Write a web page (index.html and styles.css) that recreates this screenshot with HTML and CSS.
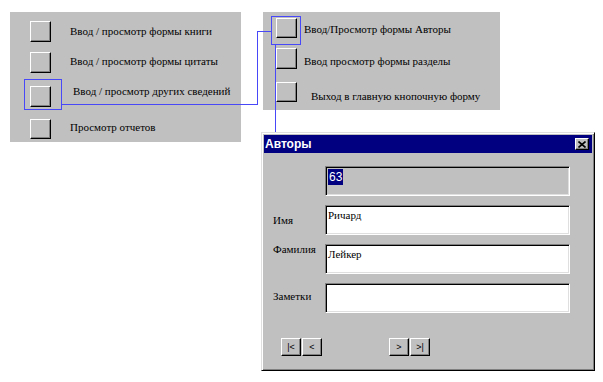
FILE: index.html
```html
<!DOCTYPE html>
<html>
<head>
  <meta charset="UTF-8">
  <title>Авторы - кнопочная форма</title>
  <link rel="stylesheet" href="styles.css">
</head>
<body>
  <div class="canvas">
    <!-- Main switchboard -->
    <div class="panel panel-main">
      <div class="row row-1"><span class="btn"></span><span class="caption">Ввод / просмотр формы книги</span></div>
      <div class="row row-2"><span class="btn"></span><span class="caption">Ввод / просмотр формы цитаты</span></div>
      <div class="row row-3"><span class="btn"></span><span class="caption wide">Ввод / просмотр других сведений</span></div>
      <div class="row row-4"><span class="btn"></span><span class="caption">Просмотр отчетов</span></div>
    </div>

    <!-- Sub switchboard -->
    <div class="panel panel-sub">
      <div class="row row-a"><span class="btn"></span><span class="caption near">Ввод/Просмотр формы Авторы</span></div>
      <div class="row row-b"><span class="btn"></span><span class="caption near">Ввод просмотр формы разделы</span></div>
      <div class="row row-c"><span class="btn"></span><span class="caption far">Выход в главную кнопочную форму</span></div>
    </div>

    <!-- Selection marks and connectors -->
    <div class="mark mark-left"></div>
    <div class="mark mark-right"></div>
    <div class="wire wire-h1"></div>
    <div class="wire wire-v1"></div>
    <div class="wire wire-h2"></div>
    <div class="wire wire-v2"></div>

    <!-- Authors form -->
    <div class="dialog">
      <div class="titlebar">
        <span class="title">Авторы</span>
        <span class="close">
          <svg width="8" height="7" viewBox="0 0 8 7"><path d="M0.5 0.5 L7.5 6.5 M7.5 0.5 L0.5 6.5" stroke="#000" stroke-width="1.6"/></svg>
        </span>
      </div>
      <div class="form">
        <div class="fields">
          <span class="label"></span>
          <div class="field field-id"><span class="selected">63</span></div>
          <span class="label">Имя</span>
          <div class="field">Ричард</div>
          <span class="label label-top">Фамилия</span>
          <div class="field">Лейкер</div>
          <span class="label">Заметки</span>
          <div class="field"></div>
        </div>
        <div class="nav">
          <div class="nav-group">
            <span class="nav-btn">|&lt;</span>
            <span class="nav-btn">&lt;</span>
          </div>
          <div class="nav-group">
            <span class="nav-btn">&gt;</span>
            <span class="nav-btn">&gt;|</span>
          </div>
        </div>
      </div>
    </div>
  </div>
</body>
</html>
```

FILE: styles.css
```css
body { margin: 0; background: #fff; font-family: "Liberation Serif", "Times New Roman", serif; font-size: 11px; color: #000; }
.canvas { position: relative; width: 603px; height: 382px; overflow: hidden; }

/* switchboard panels */
.panel { position: absolute; background: #c0c0c0; box-sizing: border-box; }
.panel-main { left: 10px; top: 12px; width: 231px; height: 130px; padding: 9px 0 0 20px; }
.panel-sub { left: 263px; top: 12px; width: 237px; height: 98px; padding: 6px 0 0 13px; }

.row { display: flex; align-items: center; }
.row-1 { height: 21px; margin-bottom: 10px; }
.row-2 { height: 21px; margin-bottom: 13px; }
.row-3 { height: 21px; margin-bottom: 12px; }
.row-4 { height: 20px; }
.row-a { height: 20px; margin-bottom: 10px; }
.row-b { height: 21px; margin-bottom: 13px; }
.row-c { height: 19px; }

.btn { width: 21px; height: 21px; flex: none; box-sizing: border-box; background: #c0c0c0;
  border-top: 1px solid #fff; border-left: 1px solid #fff; border-right: 1px solid #000; border-bottom: 1px solid #000;
  box-shadow: inset -1px -1px #808080; }
.row-4 .btn, .row-a .btn, .row-c .btn { height: 20px; }
.caption { margin-left: 19px; white-space: nowrap; }
.row-1 .caption { margin-top: -2px; }
.row-2 .caption { margin-top: -4px; }
.row-3 .caption { margin-top: -11px; }
.row-4 .caption { margin-top: -4px; }
.caption.wide { margin-left: 22px; }
.caption.near { margin-left: 7px; }
.caption.far { margin-left: 14px; }
.row-a .caption { margin-top: 2px; }
.row-b .caption { margin-top: 5px; }
.row-c .caption { margin-top: 8px; }

/* selection marks and connector wires */
.mark { position: absolute; border: 1px solid #4848f8; box-sizing: border-box; }
.mark-left { left: 24px; top: 79px; width: 38px; height: 31px; }
.mark-right { left: 271px; top: 16px; width: 30px; height: 29px; }
.wire { position: absolute; background: #4848f8; }
.wire-h1 { left: 62px; top: 104px; width: 196px; height: 1px; }
.wire-v1 { left: 257px; top: 31px; width: 1px; height: 74px; }
.wire-h2 { left: 257px; top: 31px; width: 14px; height: 1px; }
.wire-v2 { left: 275px; top: 45px; width: 1px; height: 88px; }

/* dialog window */
.dialog { position: absolute; left: 261px; top: 132px; width: 334px; height: 239px; box-sizing: border-box;
  background: #c0c0c0; border: 1px solid; border-color: #dfdfdf #000 #000 #dfdfdf;
  box-shadow: inset 1px 1px #fff, inset -1px -1px #808080; padding: 2px; display: flex; flex-direction: column; }
.titlebar { height: 18px; background: #000080; color: #fff; display: flex; align-items: center; justify-content: space-between; padding: 0 3px 0 1px; }
.title { font-family: "Liberation Sans", Arial, sans-serif; font-weight: bold; font-size: 12px; }
.close { width: 14px; height: 12px; box-sizing: border-box; background: #c0c0c0; display: flex; align-items: center; justify-content: center;
  border-top: 1px solid #fff; border-left: 1px solid #fff; border-right: 1px solid #000; border-bottom: 1px solid #000;
  box-shadow: inset -1px -1px #808080; }

.form { padding: 13px 0 0 9px; }
.fields { display: grid; grid-template-columns: 52px 245px; grid-auto-rows: 30px; row-gap: 9px; }
.label { align-self: center; white-space: nowrap; }
.label-top { align-self: start; margin-top: -1px; }
.fields .label:nth-last-child(2) { margin-top: -4px; }
.field { box-sizing: border-box; background: #fff; padding: 3px 2px;
  border-top: 1px solid #808080; border-left: 1px solid #808080; border-right: 1px solid #fff; border-bottom: 1px solid #fff;
  box-shadow: inset 1px 1px #000, inset -1px -1px #dfdfdf; }
.field-id { background: #c0c0c0; }
.selected { background: #000080; color: #fff; font-family: "Liberation Sans", Arial, sans-serif; font-size: 12px; padding: 1px 1px; }

.nav { display: flex; gap: 67px; padding: 25px 0 0 8px; }
.nav-group { display: flex; gap: 1px; }
.nav-btn { width: 20px; height: 18px; box-sizing: border-box; background: #c0c0c0; display: flex; align-items: center; justify-content: center;
  font-family: "Liberation Sans", Arial, sans-serif; font-size: 9px;
  border-top: 1px solid #fff; border-left: 1px solid #fff; border-right: 1px solid #000; border-bottom: 1px solid #000;
  box-shadow: inset -1px -1px #808080; }
```
